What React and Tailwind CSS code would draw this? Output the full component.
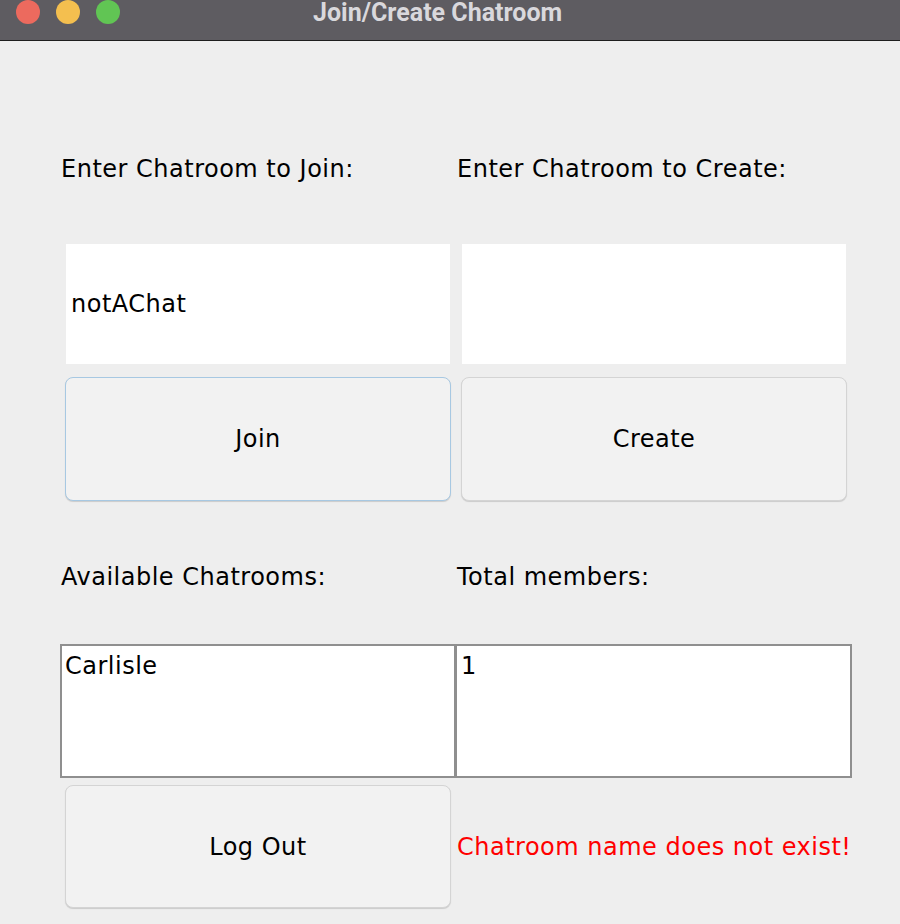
/**
 * Join/Create Chatroom window
 */
function Button({ label, focused = false }) {
  return (
    <button
      className={`mx-[5px] h-[124px] rounded-[8px] bg-[#f2f2f2] text-[24px] tracking-[0.5px] text-black
                  shadow-[0_1px_1px_rgba(0,0,0,0.15)]
                  ${focused ? 'border border-[#a7c8e2]' : 'border border-[#d4d4d4]'}`}
    >
      {label}
    </button>
  );
}

export default function App() {
  return (
    <div
      className="w-[900px] h-[924px] bg-[#eeeeee] overflow-hidden flex flex-col tracking-[0.5px]"
      style={{ fontFamily: '"DejaVu Sans", "Liberation Sans", sans-serif' }}
    >
      {/* Title bar */}
      <div className="relative h-[41px] shrink-0 bg-[#5e5c61] border-b border-[#1e1e1e] flex items-start">
        <div className="flex gap-[16px] pl-[16px] pt-0">
          <span className="w-[24px] h-[24px] rounded-full bg-[#ec6a5e]" />
          <span className="w-[24px] h-[24px] rounded-full bg-[#f4bf4f]" />
          <span className="w-[24px] h-[24px] rounded-full bg-[#61c554]" />
        </div>
        <div
          className="absolute left-[313px] top-0 text-[25px] font-bold tracking-normal text-[#d9d8dc] leading-[26px]"
          style={{ fontFamily: 'Roboto, "Liberation Sans", sans-serif' }}
        >
          Join/Create Chatroom
        </div>
      </div>

      {/* Body */}
      <div className="pl-[60px] grid grid-cols-[396px_396px]">
        {/* Row 1 labels */}
        <div className="mt-[113px] pl-[1px] h-[30px] leading-[30px] text-[24px] text-black">
          Enter Chatroom to Join:
        </div>
        <div className="mt-[113px] pl-[1px] h-[30px] leading-[30px] text-[24px] text-black">
          Enter Chatroom to Create:
        </div>

        {/* Text fields */}
        <div className="mt-[60px] mx-[6px] h-[120px] bg-white flex items-center pl-[5px] text-[24px] text-black">
          notAChat
        </div>
        <div className="mt-[60px] mx-[6px] h-[120px] bg-white" />

        {/* Buttons */}
        <div className="mt-[13px] flex flex-col">
          <Button label="Join" focused />
        </div>
        <div className="mt-[13px] flex flex-col">
          <Button label="Create" />
        </div>

        {/* Row 2 labels */}
        <div className="mt-[61px] pl-[1px] h-[30px] leading-[30px] text-[24px] text-black">
          Available Chatrooms:
        </div>
        <div className="mt-[61px] pl-[1px] h-[30px] leading-[30px] text-[24px] text-black">
          Total members:
        </div>

        {/* Lists */}
        <div className="mt-[52px] h-[134px] bg-white border-2 border-[#8f8f8f] px-[3px] pt-[5px] text-[24px] leading-[30px] text-black">
          Carlisle
        </div>
        <div className="mt-[52px] -ml-[1px] h-[134px] bg-white border-2 border-[#8f8f8f] px-[4px] pt-[5px] text-[24px] leading-[30px] text-black">
          1
        </div>

        {/* Bottom row */}
        <div className="mt-[7px] flex flex-col">
          <button className="mx-[5px] h-[123px] rounded-[8px] bg-[#f2f2f2] border border-[#d4d4d4] shadow-[0_1px_1px_rgba(0,0,0,0.15)] text-[24px] tracking-[0.5px] text-black">
            Log Out
          </button>
        </div>
        <div className="mt-[7px] h-[123px] flex items-center pl-[1px] text-[24px] text-[#ff0000] whitespace-nowrap">
          Chatroom name does not exist!
        </div>
      </div>
    </div>
  );
}
